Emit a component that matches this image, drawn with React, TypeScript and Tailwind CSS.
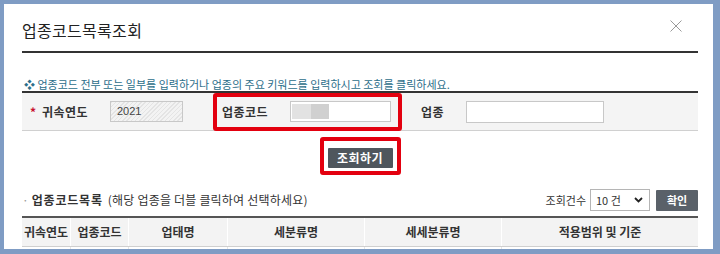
import { FC } from 'react';

const FONT = "font-['Noto_Sans_CJK_KR','Noto_Sans',sans-serif]";

const COLUMNS: { label: string; width: string }[] = [
    { label: '귀속연도', width: 'w-[48px]' },
    { label: '업종코드', width: 'w-[58px]' },
    { label: '업태명', width: 'w-[99px]' },
    { label: '세분류명', width: 'w-[137px]' },
    { label: '세세분류명', width: 'w-[137px]' },
    { label: '적용범위 및 기준', width: 'w-[197px]' },
];

const CloseIcon: FC = () => (
    <svg width="12" height="12" viewBox="0 0 12 12" fill="none">
        <path d="M0.5 0.5L11.5 11.5M11.5 0.5L0.5 11.5" stroke="#9a9a9a" strokeWidth="1" />
    </svg>
);

const Chevron: FC = () => (
    <svg width="9" height="6" viewBox="0 0 9 6" fill="none">
        <path d="M1 1L4.5 4.5L8 1" stroke="#222" strokeWidth="1.8" />
    </svg>
);

export default function App()
{
    return (
        <div className={ `w-[720px] h-[254px] bg-[#7f9cc4] pt-[4px] pl-[4px] pr-[7px] pb-[5px] ${ FONT }` }>
            <div className="h-full bg-white pl-[18px] pr-[15px] overflow-hidden">
                {/* Header */}
                <div className="flex items-start justify-between pt-[14px] pb-[9px] border-b-2 border-[#333]">
                    <h1 className="text-[16px] leading-[24px] text-[#222] tracking-[0.3px]">업종코드목록조회</h1>
                    <div className="mt-[2px] mr-[16px]"><CloseIcon /></div>
                </div>

                {/* Guide */}
                <p className="mt-[24px] pl-[2px] text-[11px] leading-[14px] text-[#2c6e8a]">
                    ❖ 업종코드 전부 또는 일부를 입력하거나 업종의 주요 키워드를 입력하시고 조회를 클릭하세요.
                </p>

                {/* Search box */}
                <div className="flex items-center h-[40px] pl-[8px] bg-[#f4f4f4] border-t-2 border-[#333] border-b border-b-[#d0d0d0]">
                    <span className="w-[12px] text-[12px] text-[#c8102e] font-bold">*</span>
                    <span className="w-[68px] text-[12px] font-bold text-[#333] tracking-[0.5px]">귀속연도</span>
                    <div className="w-[73px] h-[21px] flex items-center pl-[6px] border border-[#c8c8c8] bg-[repeating-linear-gradient(135deg,#e4e4e4_0px,#e4e4e4_1px,#f3f3f3_1px,#f3f3f3_3px)] text-[11px] text-[#444] font-['Liberation_Sans',sans-serif]">
                        2021
                    </div>
                    <div className="ml-[30px] w-[189px] h-[38px] flex items-center pl-[5px] border-4 border-[#e3000f] rounded-[3px]">
                        <span className="w-[68px] text-[12px] font-bold text-[#333] tracking-[0.5px]">업종코드</span>
                        <div className="w-[101px] h-[21px] flex items-center pl-[1px] bg-white border border-[#c8c8c8]">
                            <span className="w-[19px] h-[15px] bg-[#e2e2e2]" />
                            <span className="w-[18px] h-[15px] bg-[#d0d0d0]" />
                        </div>
                    </div>
                    <span className="ml-[19px] w-[45px] text-[12px] font-bold text-[#333] tracking-[0.5px]">업종</span>
                    <div className="w-[138px] h-[22px] bg-white border border-[#c8c8c8]" />
                </div>

                {/* Search button */}
                <div className="flex justify-center mt-[6px]">
                    <div className="border-4 border-[#e3000f] rounded-[3px] px-[4px] py-[3px]">
                        <button className="w-[65px] h-[20px] bg-[#4f565d] text-white text-[12px] font-bold tracking-[0.5px] rounded-[1px]">
                            조회하기
                        </button>
                    </div>
                </div>

                {/* List header */}
                <div className="flex items-center justify-between mt-[14px] h-[22px]">
                    <div className="flex items-center text-[#333]">
                        <span className="text-[#999] text-[12px] mr-[3px]">·</span>
                        <span className="font-bold text-[12px] tracking-[0.8px]">업종코드목록</span>
                        <span className="ml-[5px] text-[12px] tracking-[0.2px]">(해당 업종을 더블 클릭하여 선택하세요)</span>
                    </div>
                    <div className="flex items-center">
                        <span className="text-[11px] text-[#333] mr-[4px]">조회건수</span>
                        <div className="w-[60px] h-[22px] flex items-center justify-between pl-[5px] pr-[6px] border border-[#b5b5b5] bg-white text-[11px] text-[#333]">
                            <span>10 건</span>
                            <Chevron />
                        </div>
                        <button className="ml-[6px] w-[42px] h-[21px] bg-[#5a6169] text-white text-[11px] font-bold rounded-[1px]">
                            확인
                        </button>
                    </div>
                </div>

                {/* Table */}
                <div className="mt-[5px] border-t-2 border-[#555]">
                    <div className="flex h-[29px] bg-[#f3f3f3] border-b border-[#cfcfcf]">
                        { COLUMNS.map((c, i) => (
                            <div
                                key={ c.label }
                                className={ `${ c.width } flex items-center justify-center text-[12px] font-bold text-[#333] whitespace-nowrap ${ i > 0 ? 'border-l border-white' : '' }` }
                            >
                                { c.label }
                            </div>
                        )) }
                    </div>
                    <div className="flex h-[8px]">
                        { COLUMNS.map((c, i) => (
                            <div key={ c.label } className={ `${ c.width } ${ i > 0 ? 'border-l border-[#e6e6e6]' : '' }` } />
                        )) }
                    </div>
                </div>
            </div>
        </div>
    );
}
